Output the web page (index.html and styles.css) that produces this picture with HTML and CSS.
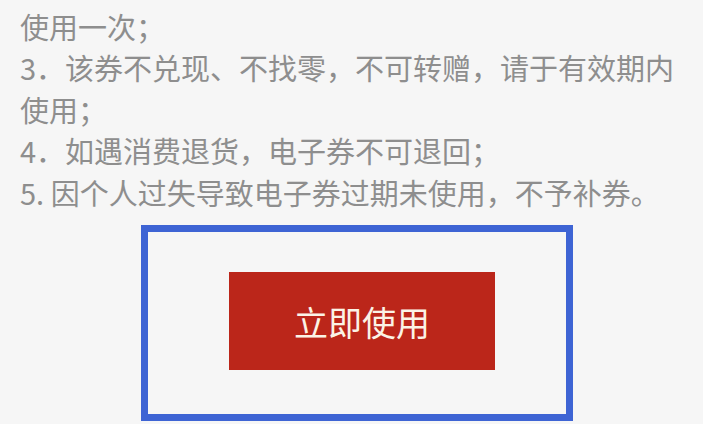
FILE: index.html
```html
<!DOCTYPE html>
<html lang="zh-CN">
<head>
<meta charset="utf-8">
<title>电子券使用说明</title>
<link rel="stylesheet" href="styles.css">
</head>
<body>
<div class="page">
  <div class="rules">
    <p class="rule">2．每个订单仅限使用一张电子券，每张电子券仅限使用一次；</p>
    <p class="rule">3．该券不兑现、不找零，不可转赠，请于有效期内使用；</p>
    <p class="rule">4．如遇消费退货，电子券不可退回；</p>
    <p class="rule">5. 因个人过失导致电子券过期未使用，不予补券。</p>
  </div>
  <div class="action">
    <button class="use-btn" type="button">立即使用</button>
  </div>
</div>
</body>
</html>
```

FILE: styles.css
```css
html, body {
  margin: 0;
  padding: 0;
  background: #f6f6f6;
  overflow: hidden;
}

.page {
  width: 703px;
  height: 424px;
  overflow: hidden;
  font-family: "Noto Sans CJK SC", "Noto Sans", sans-serif;
}

.rules {
  margin-top: -36px;
  padding-left: 20px;
  width: 660px;
}

.rule {
  margin: 0;
  font-size: 29px;
  line-height: 41.5px;
  color: #8e8e8e;
}

.action {
  margin-top: 12px;
  margin-left: 141px;
  border: 7px solid #3e64d4;
  padding: 40px 0 44px 81px;
  box-sizing: content-box;
  width: 337px;
}

.use-btn {
  display: flex;
  align-items: center;
  justify-content: center;
  width: 266px;
  height: 98px;
  border: none;
  padding: 0;
  background: #bb261a;
  color: #fbf3e6;
  font-family: "Noto Sans CJK SC", "Noto Sans", sans-serif;
  font-size: 34px;
  cursor: pointer;
}
```
